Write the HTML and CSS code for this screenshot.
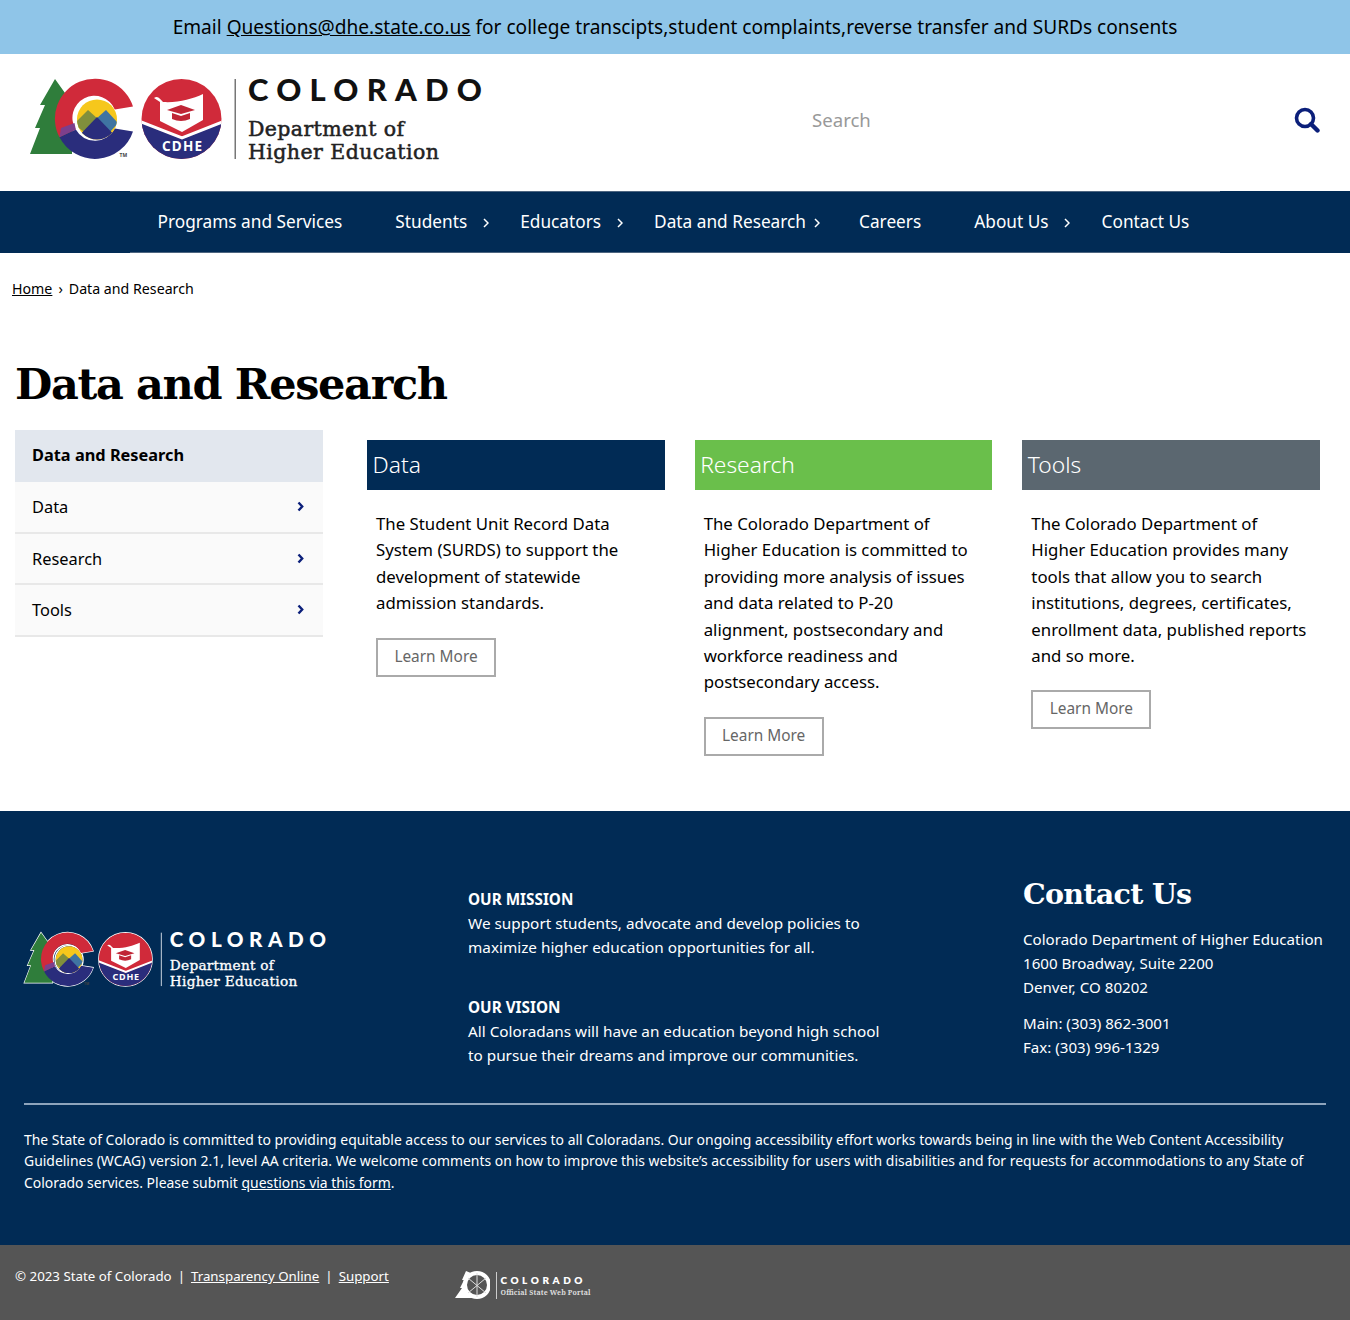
FILE: index.html
```html
<!DOCTYPE html>
<html lang="en">
<head>
<meta charset="utf-8">
<title>Data and Research</title>
<link rel="stylesheet" href="styles.css">
</head>
<body>
<svg class="defs" width="0" height="0" aria-hidden="true">
  <defs>
    <clipPath id="sun"><circle cx="97" cy="119.500" r="20"/></clipPath>
    <clipPath id="disc"><circle cx="181.500" cy="119" r="40"/></clipPath>
    <g id="mark">
      <polygon fill="#2f7d3b" points="55,79 40,105 45,105 35,128 40,128 30,154 72,154 72,100 65,93"/>
      <path fill="#d02a3a" d="M133,106.5A40,40 0 1 0 59.5,137.3L75.8,129.5A22,22 0 1 1 114.8,109.5Z"/>
      <path fill="#2a2d7c" d="M59.5,137.3A40,40 0 0 0 133,131.4L114.8,128.5A22,22 0 0 1 75.8,129.5Z"/>
      <polygon fill="#7c3f8c" points="59.5,137.3 75.8,129.5 74.500,123 61,128"/>
      <g clip-path="url(#sun)">
        <rect x="76" y="99" width="42" height="42" fill="#f6c71c"/>
        <polygon fill="#808f3c" points="74,124 88,110 98,119 84,132"/>
        <polygon fill="#3f74a2" points="96,119 106,110 118,123 110,132"/>
        <polygon fill="#2a2d7c" points="97,117 70,145 124,145"/>
      </g>
      <g clip-path="url(#disc)">
        <rect x="141" y="79" width="81" height="80" fill="#d02a3a"/>
        <polygon fill="#2a2d7c" points="141,123 182,139 222,123 222,159 141,159"/>
        <polyline fill="none" stroke="#fff" stroke-width="3" points="139,121 182,138 225,121"/>
      </g>
      <path fill="#fff" d="M154,98C158,95 160,99 163,102C178,103 192,99 203,94L203,120L182,132L160,121L160,102Z"/>
      <polygon fill="#c02535" points="167,110 181,105 195,110 181,114"/>
      <path fill="#c02535" d="M172,113L181,116L190,113L190,119Q181,123 172,119Z"/>
      <text class="cdhe" x="162" y="150.500" textLength="40">CDHE</text>
      <text class="tm" x="119.500" y="157">TM</text>
      <rect x="234.500" y="79" width="1.500" height="80"/>
    </g>
  </defs>
</svg>

<div class="banner">Email <a href="#">Questions@dhe.state.co.us</a> for college transcipts,student complaints,reverse transfer and SURDs consents</div>

<header class="masthead">
  <svg class="logo" viewBox="28 66 460 98" role="img" aria-label="Colorado Department of Higher Education">
    <use href="#mark" fill="#777"/>
    <text class="lg-state" x="248" y="101" textLength="234">COLORADO</text>
    <text class="lg-dept" x="248" y="135.500" textLength="156">Department of</text>
    <text class="lg-dept" x="248" y="158.500" textLength="191">Higher Education</text>
  </svg>
  <div class="search">
    <span class="search-label">Search</span>
    <svg class="search-icon" viewBox="0 0 26 26" aria-hidden="true"><circle cx="11" cy="11" r="8.500" fill="none" stroke="#0b1f7a" stroke-width="3.600"/><path d="M17,17L23.500,23.500" stroke="#0b1f7a" stroke-width="4.400" stroke-linecap="round"/></svg>
  </div>
</header>

<nav class="nav">
  <ul class="nav-list">
    <li class="nav-item">Programs and Services</li>
    <li class="nav-item has-sub">Students<svg class="nav-arrow" viewBox="0 0 6 10"><path d="M1,1L5,5L1,9"/></svg></li>
    <li class="nav-item has-sub">Educators<svg class="nav-arrow" viewBox="0 0 6 10"><path d="M1,1L5,5L1,9"/></svg></li>
    <li class="nav-item has-sub tight">Data and Research<svg class="nav-arrow" viewBox="0 0 6 10"><path d="M1,1L5,5L1,9"/></svg></li>
    <li class="nav-item">Careers</li>
    <li class="nav-item has-sub">About Us<svg class="nav-arrow" viewBox="0 0 6 10"><path d="M1,1L5,5L1,9"/></svg></li>
    <li class="nav-item">Contact Us</li>
  </ul>
</nav>

<div class="crumbs"><a href="#">Home</a><span class="crumb-sep">›</span>Data and Research</div>

<main class="main">
  <h1 class="title">Data and Research</h1>
  <div class="columns">
    <aside class="side">
      <div class="side-head">Data and Research</div>
      <div class="side-item">Data<svg class="side-arrow" viewBox="0 0 7 11"><path d="M1.500,1.500L5.200,5.500L1.500,9.500"/></svg></div>
      <div class="side-item">Research<svg class="side-arrow" viewBox="0 0 7 11"><path d="M1.500,1.500L5.200,5.500L1.500,9.500"/></svg></div>
      <div class="side-item">Tools<svg class="side-arrow" viewBox="0 0 7 11"><path d="M1.500,1.500L5.200,5.500L1.500,9.500"/></svg></div>
    </aside>
    <section class="cards">
      <article class="card">
        <h2 class="card-head navy">Data</h2>
        <div class="card-body">
          <p>The Student Unit Record Data<br>System (SURDS) to support the<br>development of statewide<br>admission standards.</p>
          <a class="btn" href="#">Learn More</a>
        </div>
      </article>
      <article class="card">
        <h2 class="card-head green">Research</h2>
        <div class="card-body">
          <p>The Colorado Department of<br>Higher Education is committed to<br>providing more analysis of issues<br>and data related to P-20<br>alignment, postsecondary and<br>workforce readiness and<br>postsecondary access.</p>
          <a class="btn" href="#">Learn More</a>
        </div>
      </article>
      <article class="card">
        <h2 class="card-head slate">Tools</h2>
        <div class="card-body">
          <p>The Colorado Department of<br>Higher Education provides many<br>tools that allow you to search<br>institutions, degrees, certificates,<br>enrollment data, published reports<br>and so more.</p>
          <a class="btn" href="#">Learn More</a>
        </div>
      </article>
    </section>
  </div>
</main>

<footer class="footer">
  <div class="foot-grid">
    <svg class="foot-logo" viewBox="28 66 460 98" role="img" aria-label="Colorado Department of Higher Education">
      <g class="halo">
        <polygon points="55,79 40,105 45,105 35,128 40,128 30,154 72,154 72,100 65,93"/>
        <path d="M133,106.5A40,40 0 1 0 59.5,137.3A40,40 0 0 0 133,131.4L114.8,128.5A22,22 0 1 1 114.8,109.5Z"/>
        <circle cx="97" cy="119.500" r="21"/>
        <circle cx="181.500" cy="119" r="40"/>
      </g>
      <use href="#mark" fill="#c9d3de"/>
      <text class="lg-state white" x="248" y="101" textLength="234">COLORADO</text>
      <text class="lg-dept white" x="248" y="135.500" textLength="156">Department of</text>
      <text class="lg-dept white" x="248" y="158.500" textLength="191">Higher Education</text>
    </svg>
    <div class="foot-mid">
      <p class="foot-p"><strong>OUR MISSION</strong><br>We support students, advocate and develop policies to<br>maximize higher education opportunities for all.</p>
      <p class="foot-p"><strong>OUR VISION</strong><br>All Coloradans will have an education beyond high school<br>to pursue their dreams and improve our communities.</p>
    </div>
    <div class="foot-contact">
      <h2 class="foot-title">Contact Us</h2>
      <p class="foot-addr">Colorado Department of Higher Education<br>1600 Broadway, Suite 2200<br>Denver, CO 80202</p>
      <p class="foot-addr">Main: (303) 862-3001<br>Fax: (303) 996-1329</p>
    </div>
  </div>
  <hr class="foot-rule">
  <p class="foot-note">The State of Colorado is committed to providing equitable access to our services to all Coloradans. Our ongoing accessibility effort works towards being in line with the Web Content Accessibility<br>Guidelines (WCAG) version 2.1, level AA criteria. We welcome comments on how to improve this website’s accessibility for users with disabilities and for requests for accommodations to any State of<br>Colorado services. Please submit <a href="#">questions via this form</a>.</p>
</footer>

<div class="legal">
  <div class="legal-text">© 2023 State of Colorado<span class="pipe">|</span><a href="#">Transparency Online</a><span class="pipe">|</span><a href="#">Support</a></div>
  <svg class="portal" viewBox="455 1268 137 32" role="img" aria-label="Colorado Official State Web Portal">
    <polygon fill="#fff" points="466,1271 462,1280 464,1280 460,1288 462,1288 455,1298 478,1298 478,1276"/>
    <circle cx="477" cy="1285" r="12" fill="#555" stroke="#fff" stroke-width="4"/>
    <path d="M468,1278L486,1293M486,1278L468,1293M477,1273V1297" stroke="#ddd" stroke-width="1"/>
    <rect x="490" y="1279" width="5" height="12" fill="#555"/>
    <rect x="496" y="1272" width="1" height="27" fill="#ccc"/>
    <text class="pt-state" x="500.500" y="1283.500" textLength="82">COLORADO</text>
    <text class="pt-sub" x="500.500" y="1295" textLength="90">Official State Web Portal</text>
  </svg>
</div>
</body>
</html>
```
FILE: styles.css
```css
* { box-sizing: border-box; }
html, body { margin: 0; padding: 0; }
body { font-family: "Noto Sans", sans-serif; color: #000; background: #fff; }
a { color: inherit; }
.defs { position: absolute; }

.banner { height: 54px; background: #8fc5e8; text-align: center; font-size: 19.1px; line-height: 54px; }

.masthead { display: flex; justify-content: space-between; align-items: center; padding: 12px 30px 27px 28px; }
.logo { display: block; width: 460px; height: 98px; }
.search { display: flex; align-items: center; justify-content: space-between; width: 508px; margin-top: 10px; }
.search-label { padding-bottom: 1px; font-size: 18.6px; color: #999; }
.search-icon { display: block; width: 26px; height: 26px; }

.cdhe { font: 700 13.5px "Noto Sans", sans-serif; fill: #fff; }
.tm { font: 700 5px "Noto Sans", sans-serif; fill: #444; }
.lg-state { font: 900 31px Lato, sans-serif; fill: #111; }
.lg-dept { font: 400 20.5px "DejaVu Serif", serif; fill: #222; stroke: #222; stroke-width: 0.500; }
.white { fill: #fff; stroke: none; }
.lg-dept.white { stroke: #fff; }

.nav { background: #012b55; }
.nav-list { list-style: none; margin: 0 130px; padding: 0 1px 2px; height: 62px; display: flex; align-items: center; border-top: 1px solid #4d6580; border-bottom: 1px solid #4d6580; color: #fff; font-size: 17.250px; }
.nav-item { position: relative; padding: 0 26.5px; white-space: nowrap; }
.nav-arrow { position: absolute; right: 5px; top: 50%; width: 6px; height: 10px; margin-top: -3px; fill: none; stroke: #fff; stroke-width: 1.500; }
.tight .nav-arrow { right: 12.500px; }

.crumbs { padding: 25px 0 0 12px; font-size: 14.200px; line-height: 22px; }
.crumb-sep { margin: 0 6px; }

.main { padding: 56px 30px 55px 15px; }
.title { margin: 0 0 18px; font: 700 43px/56px "DejaVu Serif", serif; letter-spacing: -1.350px; }
.columns { display: grid; grid-template-columns: 308px 1fr; column-gap: 44px; }

.side-head { height: 52px; padding: 0 0 3px 17px; display: flex; align-items: center; background: #e2e7ee; font-size: 16.350px; font-weight: 700; }
.side-item { height: 51.500px; padding: 0 19px 0 17px; display: flex; align-items: center; justify-content: space-between; background: #fafafa; border-bottom: 2px solid #e8e8e8; font-size: 16.400px; }
.side-arrow { width: 7px; height: 11px; fill: none; stroke: #0b1f7a; stroke-width: 2.400; }

.cards { display: grid; grid-template-columns: repeat(3, 1fr); column-gap: 30px; padding-top: 10px; }
.card-head { height: 50px; margin: 0; padding-left: 5.500px; font-size: 22.800px; font-weight: 300; line-height: 50px; color: #fff; }
.navy { background: #012b55; }
.green { background: #6abf4b; }
.slate { background: #5b6770; }
.card-body { padding: 21px 9px 0; }
.card-body p { margin: 0 0 21px; font-size: 16.800px; line-height: 26.400px; }
.btn { display: inline-block; width: 120px; height: 39px; border: 2px solid #aaa; text-align: center; text-decoration: none; color: #666; font-size: 15.400px; line-height: 34px; }

.footer { background: #012b55; color: #fff; padding: 64px 24px 51px; }
.foot-grid { display: grid; grid-template-columns: 444px 555px 1fr; align-items: start; }
.foot-logo { display: block; width: 307px; height: 65.400px; margin: 49px 0 0 -1px; }
.halo { fill: none; stroke: #fff; stroke-width: 2; }
.foot-mid { margin-top: 12px; }
.foot-p { margin: 0 0 36px; font-size: 15.300px; line-height: 24px; }
.foot-p:last-child { margin-bottom: 0; }
.foot-title { margin: 0 0 15px; padding-top: 1px; font: 700 28.500px/36px "DejaVu Serif", serif; letter-spacing: -0.700px; }
.foot-addr { margin: 0 0 12px; font-size: 15.100px; line-height: 24px; white-space: nowrap; }
.foot-addr:last-child { margin-bottom: 0; }
.foot-rule { height: 2px; margin: 36px 0 25px; border: 0; background: #8ea4bc; }
.foot-note { margin: -1px 0 1px; font-size: 13.930px; line-height: 21.500px; white-space: nowrap; }

.legal { height: 75px; display: flex; align-items: flex-start; padding: 20px 0 0 15px; background: #555; color: #fff; }
.legal-text { width: 440px; font-size: 13.300px; line-height: 22px; }
.pipe { margin: 0 6px; }
.portal { display: block; width: 137px; height: 32px; margin-top: 3px; }
.pt-state { font: 800 10px Lato, sans-serif; fill: #fff; }
.pt-sub { font: 700 7px "Noto Serif", serif; fill: #ddd; }
```
